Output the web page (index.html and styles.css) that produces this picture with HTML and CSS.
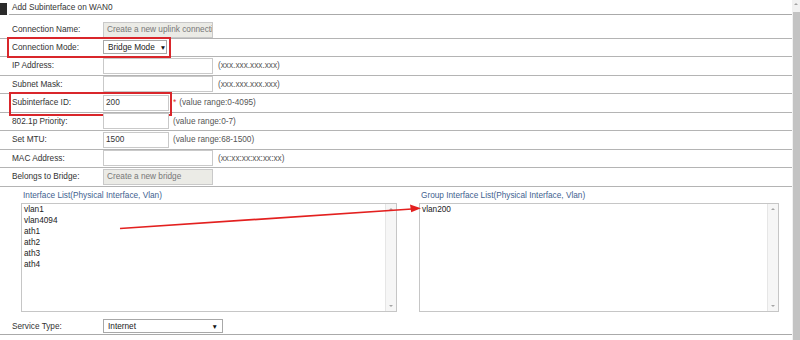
FILE: index.html
```html
<!DOCTYPE html>
<html>
<head>
<meta charset="utf-8">
<link rel="stylesheet" href="styles.css">
</head>
<body>
<div class="window">
  <div class="main">
    <div class="title">
      <span class="mark"></span>
      <span class="title-text">Add Subinterface on WAN0</span>
    </div>
    <div class="form">
      <div class="row first">
        <span class="label">Connection Name:</span>
        <span class="input wide disabled">Create a new uplink connectio</span>
      </div>
      <div class="row">
        <span class="label">Connection Mode:</span>
        <span class="select mode">Bridge Mode<span class="caret">▼</span></span>
        <span class="redbox box-mode"></span>
      </div>
      <div class="row">
        <span class="label">IP Address:</span>
        <span class="input wide"></span>
        <span class="hint">(xxx.xxx.xxx.xxx)</span>
      </div>
      <div class="row">
        <span class="label">Subnet Mask:</span>
        <span class="input wide"></span>
        <span class="hint">(xxx.xxx.xxx.xxx)</span>
      </div>
      <div class="row">
        <span class="label">Subinterface ID:</span>
        <span class="input narrow">200</span>
        <span class="req">*</span><span class="hint tight">(value range:0-4095)</span>
        <span class="redbox box-id"></span>
      </div>
      <div class="row">
        <span class="label">802.1p Priority:</span>
        <span class="input narrow"></span>
        <span class="hint short">(value range:0-7)</span>
      </div>
      <div class="row">
        <span class="label">Set MTU:</span>
        <span class="input narrow">1500</span>
        <span class="hint short">(value range:68-1500)</span>
      </div>
      <div class="row">
        <span class="label">MAC Address:</span>
        <span class="input wide"></span>
        <span class="hint">(xx:xx:xx:xx:xx:xx)</span>
      </div>
      <div class="row">
        <span class="label">Belongs to Bridge:</span>
        <span class="input wide disabled">Create a new bridge</span>
      </div>
    </div>
    <div class="lists">
      <div class="list-col left">
        <div class="list-title">Interface List(Physical Interface, Vlan)</div>
        <div class="listbox">
          <div class="items">
            <div>vlan1</div>
            <div>vlan4094</div>
            <div>ath1</div>
            <div>ath2</div>
            <div>ath3</div>
            <div>ath4</div>
          </div>
          <div class="lscroll"><span class="tri up"></span><span class="tri down"></span></div>
        </div>
      </div>
      <div class="list-col right">
        <div class="list-title">Group Interface List(Physical Interface, Vlan)</div>
        <div class="listbox">
          <div class="items">
            <div>vlan200</div>
          </div>
          <div class="lscroll"><span class="tri up"></span><span class="tri down"></span></div>
        </div>
      </div>
    </div>
    <div class="row service">
      <span class="label">Service Type:</span>
      <span class="select svc">Internet<span class="caret">▼</span></span>
    </div>
  </div>
  <div class="vscroll">
    <span class="vup"></span>
    <span class="vthumb"></span>
  </div>
  <svg class="arrow" width="800" height="340" viewBox="0 0 800 340">
    <line x1="120" y1="228.5" x2="412" y2="209" stroke="#e3201f" stroke-width="1.7"/>
    <polygon points="421,208.3 410,204.6 411.2,212.2" fill="#e3201f"/>
  </svg>
</div>
</body>
</html>
```

FILE: styles.css
```css
* { box-sizing: border-box; }
html, body { margin: 0; padding: 0; }
body {
  font-family: "Liberation Sans", Arial, sans-serif;
  font-size: 8.25px;
  color: #333;
  background: #fff;
  width: 800px;
  height: 340px;
  overflow: hidden;
}
.window {
  position: relative;
  display: flex;
  width: 800px;
  height: 340px;
}
.main {
  width: 792px;
  display: flex;
  flex-direction: column;
}
.title {
  display: flex;
  height: 15px;
}
.mark {
  width: 7px;
  height: 12px;
  margin-top: 3px;
  background: #2b2b2b;
}
.title-text {
  flex: 1;
  margin-left: 2px;
  padding-left: 3px;
  padding-top: 2px;
  height: 15px;
  line-height: 12px;
  border-bottom: 1px solid #aaa;
  color: #333;
}
.form {
  padding-top: 5px;
}
.row {
  position: relative;
  display: flex;
  align-items: center;
  height: 18.5px;
  border-bottom: 1px solid #b4b4b4;
}
.row.first {
  padding-top: 2px;
}
.label {
  width: 103px;
  padding-left: 12px;
  color: #333;
}
.input {
  height: 16px;
  line-height: 14px;
  border: 1px solid #c9c9c9;
  background: #fff;
  padding-left: 2px;
  white-space: nowrap;
  overflow: hidden;
  color: #333;
}
.input.wide { width: 110px; }
.input.narrow { width: 66px; }
.input.disabled {
  background: #ebebe6;
  color: #777;
  padding-left: 3px;
}
.hint {
  margin-left: 5px;
  color: #555;
}
.hint.short { margin-left: 4px; }
.hint.tight { margin-left: 3px; }
.req {
  margin-left: 4px;
  color: #e0322c;
}
.select {
  display: flex;
  align-items: center;
  height: 14px;
  border: 1px solid #a8a8a8;
  background: #fff;
  padding-left: 4px;
  color: #222;
  white-space: nowrap;
}
.select.mode { width: 64px; }
.select.svc { width: 120px; justify-content: space-between; padding-right: 4px; }
.caret {
  font-size: 6.5px;
  margin-left: 5px;
  color: #111;
}
.redbox {
  position: absolute;
  border: 2px solid #d9262b;
}
.box-mode {
  left: 7px;
  top: -2px;
  width: 164px;
  height: 21px;
}
.box-id {
  left: 9px;
  top: -2px;
  width: 163px;
  height: 24px;
}
.lists {
  display: flex;
  gap: 22px;
  padding: 2px 13px 0 21px;
}
.list-col.left { width: 376px; }
.list-col.right { width: 360px; }
.list-title {
  color: #42628f;
  padding-left: 2px;
  padding-top: 1px;
  line-height: 12px;
  height: 14px;
}
.listbox {
  display: flex;
  height: 109px;
  border: 1px solid #c6c6c6;
  background: #fff;
}
.items {
  flex: 1;
  padding: 0 2px;
  line-height: 11px;
  color: #222;
}
.lscroll {
  width: 11px;
  background: #f6f6f6;
  border-left: 1px solid #e6e6e6;
  display: flex;
  flex-direction: column;
  justify-content: space-between;
  align-items: center;
  padding: 4px 0;
}
.tri {
  width: 0;
  height: 0;
  border-left: 2px solid transparent;
  border-right: 2px solid transparent;
}
.tri.up { border-bottom: 2px solid #a5a5a5; }
.tri.down { border-top: 2px solid #a5a5a5; }
.row.service {
  margin-top: 7px;
  height: 16.5px;
  border-bottom: 1px solid #aaa;
}
.vscroll {
  width: 8px;
  display: flex;
  flex-direction: column;
  background: #f1f1f1;
}
.vup {
  height: 12px;
  display: flex;
  justify-content: center;
  padding-top: 3px;
}
.vup::before {
  content: "";
  width: 0;
  height: 0;
  border-left: 2px solid transparent;
  border-right: 2px solid transparent;
  border-bottom: 2px solid #a3a3a3;
}
.vthumb {
  flex: 1;
  background: #c3c3c3;
  margin: 0 0 0 1px;
}
.arrow {
  position: absolute;
  left: 0;
  top: 0;
  pointer-events: none;
}
```
